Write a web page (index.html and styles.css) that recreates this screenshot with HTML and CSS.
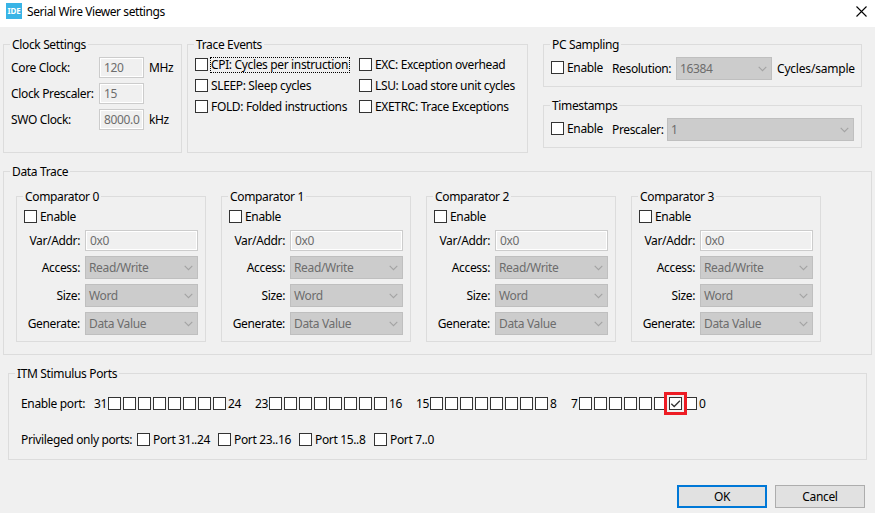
FILE: index.html
```html
<!DOCTYPE html>
<html lang="en">
<head>
<meta charset="utf-8">
<title>Serial Wire Viewer settings</title>
<link rel="stylesheet" href="styles.css">
</head>
<body>
<svg width="0" height="0" class="defs" aria-hidden="true">
  <symbol id="chevron" viewBox="0 0 9 6"><path d="M.7.8 4.5 4.6 8.3.8" fill="none" stroke="#a3a3a3" stroke-width="1.1"/></symbol>
</svg>
<div class="dialog">
  <header class="titlebar">
    <span class="logo">IDE</span>
    <h1>Serial Wire Viewer settings</h1>
    <svg class="close" viewBox="0 0 11 11"><path d="M.5.5l10 10M10.500.5l-10 10" fill="none" stroke="#000" stroke-width="1.1"/></svg>
  </header>

  <main class="content">
    <div class="top">
      <section class="group clock">
        <h2>Clock Settings</h2>
        <div class="clock-grid">
          <span>Core Clock:</span><span class="input">120</span><span>MHz</span>
          <span>Clock Prescaler:</span><span class="input">15</span><span></span>
          <span>SWO Clock:</span><span class="input">8000.0</span><span>kHz</span>
        </div>
      </section>
      <section class="group events">
        <h2>Trace Events</h2>
        <div class="events-grid">
          <label><i class="box"></i><span class="focus">CPI: Cycles per instruction</span></label>
          <label><i class="box"></i><span>EXC: Exception overhead</span></label>
          <label><i class="box"></i><span>SLEEP: Sleep cycles</span></label>
          <label><i class="box"></i><span>LSU: Load store unit cycles</span></label>
          <label><i class="box"></i><span>FOLD: Folded instructions</span></label>
          <label><i class="box"></i><span>EXETRC: Trace Exceptions</span></label>
        </div>
      </section>
      <div class="side">
        <section class="group">
          <h2>PC Sampling</h2>
          <div class="side-row">
            <label><i class="box"></i><span>Enable</span></label>
            <span class="resolution">Resolution:</span>
            <span class="combo sampling">16384<svg><use href="#chevron"/></svg></span>
            <span class="unit">Cycles/sample</span>
          </div>
        </section>
        <section class="group">
          <h2>Timestamps</h2>
          <div class="side-row">
            <label><i class="box"></i><span>Enable</span></label>
            <span class="prescaler">Prescaler:</span>
            <span class="combo stamp">1<svg><use href="#chevron"/></svg></span>
          </div>
        </section>
      </div>
    </div>

    <section class="group data">
      <h2>Data Trace</h2>
      <div class="comparators">
        <section class="group comparator">
          <h2>Comparator 0</h2>
          <label><i class="box"></i><span>Enable</span></label>
          <div class="fields">
            <span>Var/Addr:</span><span class="input">0x0</span>
            <span>Access:</span><span class="combo">Read/Write<svg><use href="#chevron"/></svg></span>
            <span>Size:</span><span class="combo">Word<svg><use href="#chevron"/></svg></span>
            <span>Generate:</span><span class="combo">Data Value<svg><use href="#chevron"/></svg></span>
          </div>
        </section>
        <section class="group comparator">
          <h2>Comparator 1</h2>
          <label><i class="box"></i><span>Enable</span></label>
          <div class="fields">
            <span>Var/Addr:</span><span class="input">0x0</span>
            <span>Access:</span><span class="combo">Read/Write<svg><use href="#chevron"/></svg></span>
            <span>Size:</span><span class="combo">Word<svg><use href="#chevron"/></svg></span>
            <span>Generate:</span><span class="combo">Data Value<svg><use href="#chevron"/></svg></span>
          </div>
        </section>
        <section class="group comparator">
          <h2>Comparator 2</h2>
          <label><i class="box"></i><span>Enable</span></label>
          <div class="fields">
            <span>Var/Addr:</span><span class="input">0x0</span>
            <span>Access:</span><span class="combo">Read/Write<svg><use href="#chevron"/></svg></span>
            <span>Size:</span><span class="combo">Word<svg><use href="#chevron"/></svg></span>
            <span>Generate:</span><span class="combo">Data Value<svg><use href="#chevron"/></svg></span>
          </div>
        </section>
        <section class="group comparator">
          <h2>Comparator 3</h2>
          <label><i class="box"></i><span>Enable</span></label>
          <div class="fields">
            <span>Var/Addr:</span><span class="input">0x0</span>
            <span>Access:</span><span class="combo">Read/Write<svg><use href="#chevron"/></svg></span>
            <span>Size:</span><span class="combo">Word<svg><use href="#chevron"/></svg></span>
            <span>Generate:</span><span class="combo">Data Value<svg><use href="#chevron"/></svg></span>
          </div>
        </section>
      </div>
    </section>

    <section class="group itm">
      <h2>ITM Stimulus Ports</h2>
      <div class="ports">
        <span class="ports-label">Enable port:</span>
        <div class="bank wide"><span>31</span><i class="box"></i><i class="box"></i><i class="box"></i><i class="box"></i><i class="box"></i><i class="box"></i><i class="box"></i><i class="box"></i><span>24</span></div>
        <div class="bank mid"><span>23</span><i class="box"></i><i class="box"></i><i class="box"></i><i class="box"></i><i class="box"></i><i class="box"></i><i class="box"></i><i class="box"></i><span>16</span></div>
        <div class="bank slim"><span>15</span><i class="box"></i><i class="box"></i><i class="box"></i><i class="box"></i><i class="box"></i><i class="box"></i><i class="box"></i><i class="box"></i><span>8</span></div>
        <div class="bank last"><span>7</span><i class="box"></i><i class="box"></i><i class="box"></i><i class="box"></i><i class="box"></i><i class="box"></i><i class="box checked"><svg viewBox="0 0 11 11"><path d="M1.300 5.700 4.200 8.500 9.900 2.800" fill="none" stroke="#333" stroke-width="1.300"/></svg><b class="marker"></b></i><i class="box"></i><span>0</span></div>
      </div>
      <div class="privileged">
        <span>Privileged only ports:</span>
        <label><i class="box"></i><span>Port 31..24</span></label>
        <label><i class="box"></i><span>Port 23..16</span></label>
        <label class="short"><i class="box"></i><span>Port 15..8</span></label>
        <label><i class="box"></i><span>Port 7..0</span></label>
      </div>
    </section>
  </main>

  <footer class="actions">
    <button class="ok" type="button">OK</button>
    <button type="button">Cancel</button>
  </footer>
</div>
</body>
</html>
```
FILE: styles.css
```css
* { box-sizing: border-box; }
body {
  margin: 0;
  background: #f0f0f0;
  color: #000;
  font: 12px/16px "Noto Sans", "Open Sans", sans-serif;
  letter-spacing: -0.35px;
  white-space: nowrap;
}
.defs { position: absolute; }
.dialog { width: 875px; height: 513px; overflow: hidden; }
.titlebar {
  display: flex;
  align-items: flex-start;
  height: 27px;
  padding: 3px 8px 0 6px;
  background: #fff;
}
.logo {
  width: 16px;
  height: 16px;
  background: #39b4e6;
  color: #fff;
  font: bold 8px/16px "Noto Sans", sans-serif;
  letter-spacing: -0.2px;
  text-align: center;
}
h1 { flex: 1; margin: 1px 0 0 5px; font: inherit; letter-spacing: -0.42px; }
.close { width: 11px; height: 11px; margin-top: 3px; }
.content { padding: 17px 3px 0; }
.group { border: 1px solid #dcdcdc; }
h2 {
  width: fit-content;
  height: 16px;
  margin: -8px 0 0 6px;
  padding: 0 2px;
  background: #f0f0f0;
  font: inherit;
}
.top { display: flex; height: 109px; }
.clock { width: 179px; margin-right: 5px; }
.clock-grid {
  display: grid;
  grid-template-columns: 88px 45px auto;
  grid-auto-rows: 21px;
  row-gap: 5px;
  align-items: center;
  padding: 4px 0 0 7px;
}
.clock-grid span:nth-child(3n) { margin-left: 5px; }
.input {
  height: 21px;
  padding-left: 4px;
  border: 1px solid #ccc;
  box-shadow: inset 0 0 0 1px #fff;
  color: #6d6d6d;
  line-height: 20px;
}
.events { width: 341px; margin-right: 15px; }
label { display: flex; align-items: center; }
label span { margin-left: 3px; }
.box {
  position: relative;
  flex: none;
  width: 13px;
  height: 13px;
  border: 1px solid #333;
  background: #fff;
}
.events-grid {
  display: grid;
  grid-template-columns: 164px auto;
  grid-auto-rows: 21px;
  padding: 1px 0 0 7px;
}
label .focus {
  width: 140px;
  margin-left: 2px;
  outline: 1px dotted #000;
  outline-offset: -1px;
  padding-left: 1px;
}
.side { display: grid; grid-template-rows: 43px 43px; row-gap: 18px; width: 319px; }
.side-row { display: flex; align-items: center; height: 23px; padding-left: 7px; margin-top: 4px; }
.side-row label { width: 61px; margin-bottom: 2px; }
.resolution { width: 64px; }
.prescaler { width: 55px; }
.combo {
  display: flex;
  align-items: center;
  justify-content: space-between;
  height: 23px;
  padding: 0 4px 0 3px;
  border: 1px solid #bfbfbf;
  background: #ccc;
  color: #6d6d6d;
}
.combo svg { width: 9px; height: 6px; }
.sampling { width: 96px; }
.stamp { width: 187px; }
.unit { margin-left: 5px; letter-spacing: -0.2px; }
.data { height: 184px; margin-top: 18px; }
.comparators { display: flex; gap: 15px; padding: 16px 0 0 12px; }
.comparator { width: 190px; height: 146px; }
.comparator label { height: 21px; margin: 1px 0 0 7px; }
.fields {
  display: grid;
  grid-template-columns: 63px 113px;
  grid-template-rows: 21px 23px 23px 23px;
  gap: 5px;
  align-items: center;
  margin-top: 3px;
}
.fields > span:nth-child(odd) { text-align: right; }
.itm { width: 859px; height: 87px; margin: 18px 0 0 5px; }
.ports { display: flex; align-items: center; height: 21px; margin-top: 11px; padding-left: 12px; }
.ports-label { width: 73px; }
.bank { display: flex; align-items: center; gap: 2px; }
.bank span:first-child { width: 12px; }
.wide { width: 161px; }
.mid { width: 161px; }
.slim { width: 155px; }
.bank.last span:first-child { width: 6px; }
.checked svg { display: block; width: 11px; height: 11px; }
.marker {
  position: absolute;
  z-index: 1;
  left: -6px;
  top: -6px;
  width: 23px;
  height: 23px;
  border: 3px solid #ed1c24;
}
.privileged { display: flex; align-items: center; height: 21px; margin-top: 15px; padding-left: 12px; }
.privileged > span { width: 116px; }
.privileged label { width: 81px; }
.privileged label.short { width: 75px; }
.actions { display: flex; justify-content: flex-end; gap: 8px; padding: 25px 10px 0; }
button {
  width: 90px;
  height: 23px;
  padding: 0;
  border: 1px solid #adadad;
  background: #e1e1e1;
  color: #000;
  font: inherit;
  letter-spacing: inherit;
}
.ok { border: 2px solid #0078d7; }
```
